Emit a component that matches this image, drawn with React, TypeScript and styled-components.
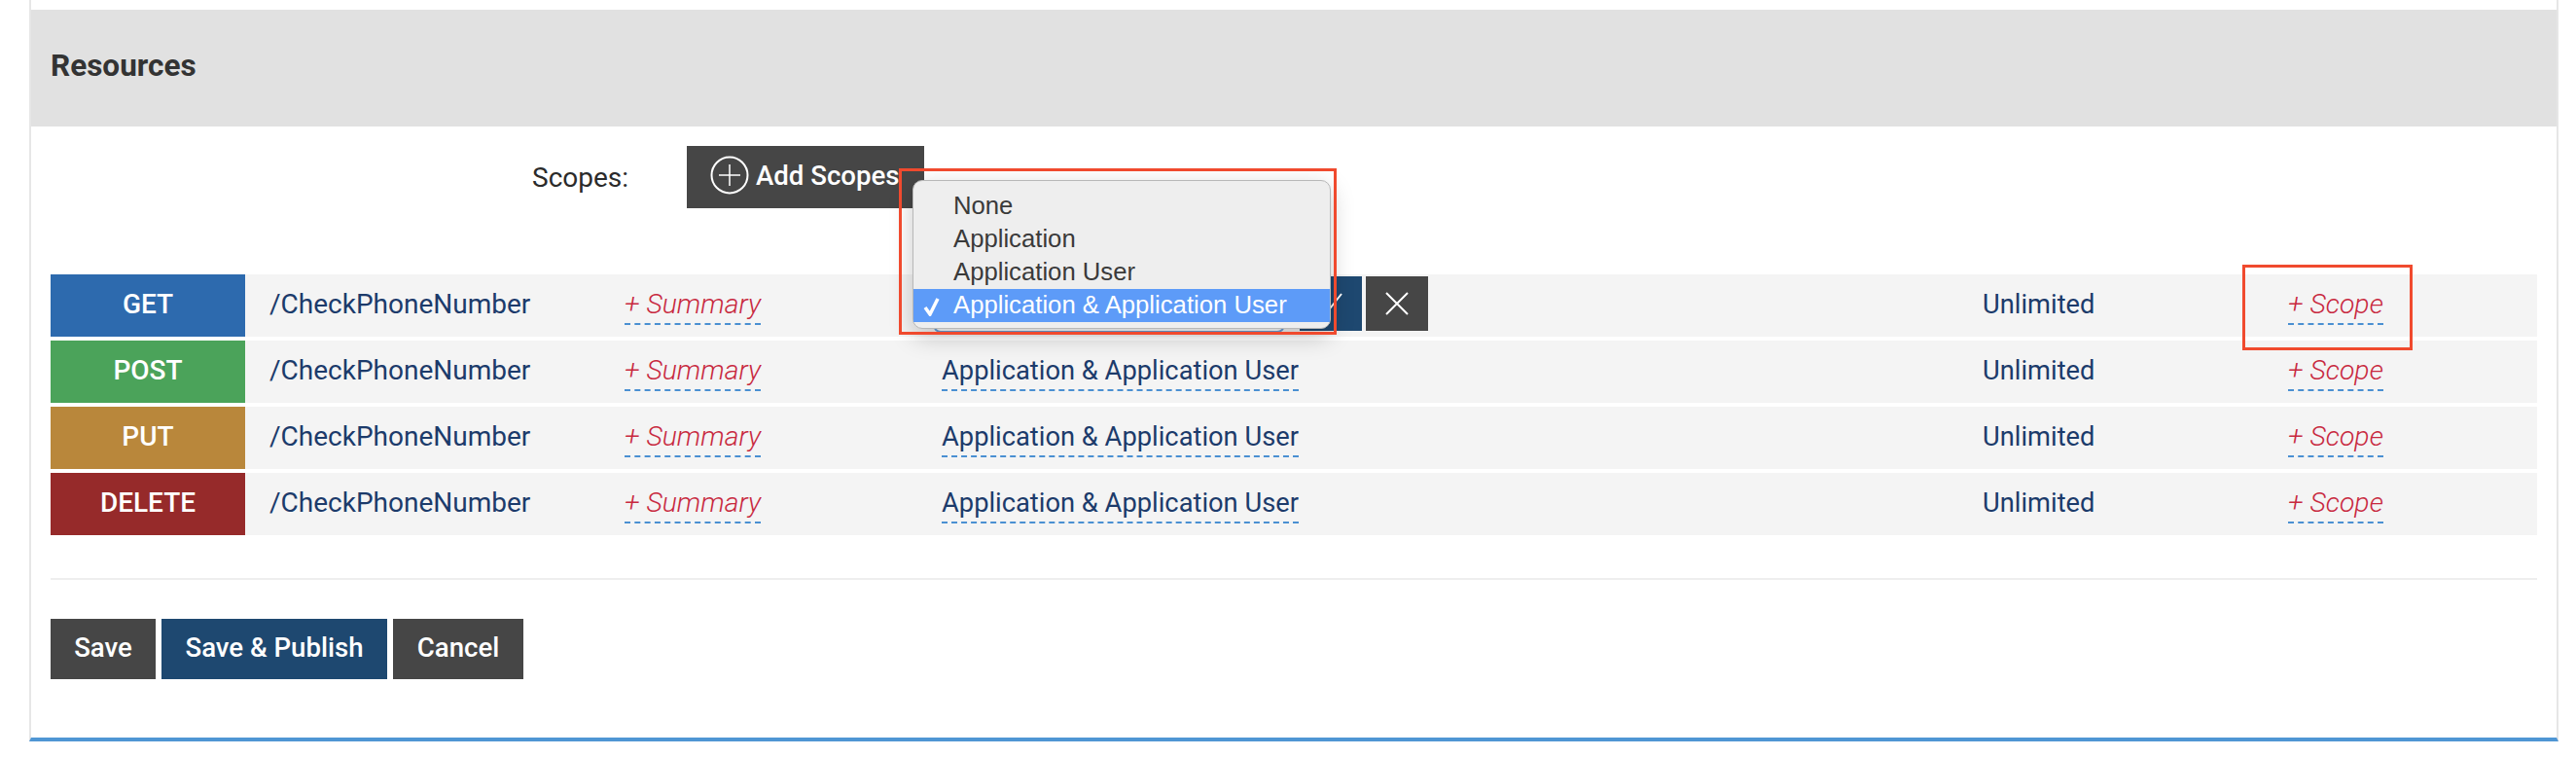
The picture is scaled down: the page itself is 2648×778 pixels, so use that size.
import React from "react";
import styled, { createGlobalStyle } from "styled-components";

const Global = createGlobalStyle`
  html, body { margin: 0; padding: 0; background: #fff; }
  body { font-family: Roboto, "Liberation Sans", sans-serif; width: 2648px; height: 778px; overflow: hidden; }
`;
const Page = styled.div`padding: 0 18px 0 30px;`;
const Card = styled.section`
  position: relative;
  box-sizing: border-box;
  width: 2600px;
  height: 762px;
  padding-top: 10px;
  border-left: 2px solid #e6e6e6;
  border-right: 2px solid #e6e6e6;
  border-bottom: 4px solid #4f96d4;
`;
const Header = styled.header`
  height: 120px;
  display: flex;
  align-items: center;
  padding-left: 20px;
  background: #e1e1e1;
`;
const Title = styled.h2`
  margin: 0 0 6px;
  font-size: 31.5px;
  font-weight: 700;
  color: #333;
`;
const Body = styled.div`padding: 20px 20px 0;`;
const ScopesBar = styled.div`
  display: flex;
  align-items: center;
  height: 64px;
  padding-left: 495px;
`;
const ScopesLabel = styled.span`
  width: 159px;
  font-size: 28px;
  color: #2b2b2b;
`;
const AddButton = styled.button`
  display: flex;
  align-items: center;
  gap: 7px;
  box-sizing: border-box;
  width: 244px;
  height: 64px;
  padding: 0 0 4px 24px;
  border: 0;
  background: #464646;
  color: #fff;
  font: 500 27.6px Roboto, sans-serif;
  white-space: nowrap;
`;
const Rows = styled.div`
  display: flex;
  flex-direction: column;
  gap: 4px;
  margin-top: 68px;
`;
const Row = styled.div`
  display: grid;
  grid-template-columns: 200px 390px 326px 1070px 314px 1fr;
  align-items: center;
  height: 64px;
  background: #f4f4f4;
  color: #1c3b6b;
  font-size: 28px;
`;
const Method = styled.div<{ $color: string }>`
  align-self: stretch;
  display: flex;
  align-items: center;
  justify-content: center;
  padding-bottom: 4px;
  background: ${(p) => p.$color};
  color: #fff;
  font-weight: 500;
  font-size: 28px;
`;
const Cell = styled.div<{ $pad?: number }>`
  padding-left: ${(p) => p.$pad ?? 0}px;
  padding-bottom: 4px;
  white-space: nowrap;
`;
const EditCell = styled.div`
  display: flex;
  padding-top: 3px;
  white-space: nowrap;
`;
const Editable = styled.span<{ $empty?: boolean }>`
  display: inline-block;
  line-height: 32px;
  padding-bottom: 3px;
  border-bottom: 2px dashed #4a90d2;
  color: ${(p) => (p.$empty ? "#c8293f" : "#1c3b6b")};
  font-style: ${(p) => (p.$empty ? "italic" : "normal")};
  font-weight: ${(p) => (p.$empty ? 300 : 400)};
  font-size: ${(p) => (p.$empty ? "28.4px" : "27.3px")};
`;
const Plain = styled(Cell)`
  font-size: 27.3px;
  padding-bottom: 3px;
`;
const EditGroup = styled.div`
  display: flex;
  align-items: flex-start;
  gap: 4px;
  align-self: start;
  margin: 2px 0 0 -9px;
  height: 56px;
`;
const SelectBox = styled.div`
  box-sizing: border-box;
  width: 362px;
  height: 58px;
  margin-right: 11px;
  border: 2px solid #6a9fd8;
  border-radius: 8px;
  background: #fff;
`;
const IconButton = styled.button<{ $color: string }>`
  display: flex;
  align-items: center;
  justify-content: center;
  width: 64px;
  height: 56px;
  padding: 0;
  border: 0;
  background: ${(p) => p.$color};
`;
const Divider = styled.hr`
  margin: 44px 0 40px;
  border: 0;
  height: 2px;
  background: #eeeeee;
`;
const Actions = styled.div`
  display: flex;
  gap: 6px;
`;
const ActionButton = styled.button<{ $color: string; $width: number }>`
  width: ${(p) => p.$width}px;
  height: 62px;
  padding: 0 0 4px;
  border: 0;
  background: ${(p) => p.$color};
  color: #fff;
  font: 500 27.6px Roboto, sans-serif;
`;
const Menu = styled.ul`
  position: absolute;
  left: 906px;
  top: 185px;
  box-sizing: border-box;
  width: 430px;
  height: 153px;
  margin: 0;
  padding: 9px 0 0;
  list-style: none;
  background: #eeeeee;
  border: 1px solid #b8b8b8;
  border-radius: 10px;
  box-shadow: 0 8px 24px rgba(0, 0, 0, 0.22);
  font-family: "Liberation Sans", Arial, sans-serif;
  font-size: 25.7px;
  color: #3a3a3a;
`;
const MenuItem = styled.li<{ $active?: boolean }>`
  position: relative;
  height: 34px;
  line-height: 33px;
  padding-left: 41px;
  white-space: nowrap;
  background: ${(p) => (p.$active ? "#5d9bf8" : "transparent")};
  color: ${(p) => (p.$active ? "#fff" : "#3a3a3a")};
`;
const Tick = styled.svg`
  position: absolute;
  left: 10px;
  top: 8px;
`;
const Highlight = styled.div<{ $l: number; $t: number; $w: number; $h: number }>`
  position: absolute;
  left: ${(p) => p.$l}px;
  top: ${(p) => p.$t}px;
  width: ${(p) => p.$w}px;
  height: ${(p) => p.$h}px;
  box-sizing: border-box;
  border: 3px solid #f04a2e;
  pointer-events: none;
`;

const methods = [
  { name: "GET", color: "#2d6aae" },
  { name: "POST", color: "#4ba35a" },
  { name: "PUT", color: "#b9873b" },
  { name: "DELETE", color: "#962a2a" },
];

export default function App() {
  return (
    <Page>
      <Global />
      <Card>
        <Header><Title>Resources</Title></Header>
        <Body>
          <ScopesBar>
            <ScopesLabel>Scopes:</ScopesLabel>
            <AddButton>
              <svg width="40" height="40" viewBox="0 0 40 40" fill="none" stroke="#fff">
                <circle cx="20" cy="20" r="18.5" strokeWidth="2" />
                <path d="M20 9v22M9 20h22" strokeWidth="1.5" />
              </svg>
              Add Scopes
            </AddButton>
          </ScopesBar>
          <Rows>
            {methods.map((m, i) => (
              <Row key={m.name}>
                <Method $color={m.color}>{m.name}</Method>
                <Cell $pad={25}>/CheckPhoneNumber</Cell>
                <EditCell><Editable $empty>+ Summary</Editable></EditCell>
                {i === 0 ? (
                  <EditGroup>
                    <SelectBox />
                    <IconButton $color="#1e4870">
                      <svg width="28" height="28" viewBox="0 0 28 28" fill="none" stroke="#fff" strokeWidth="2">
                        <path d="M3 15l7 8L25 4" />
                      </svg>
                    </IconButton>
                    <IconButton $color="#464646">
                      <svg width="26" height="26" viewBox="0 0 26 26" fill="none" stroke="#fff" strokeWidth="2">
                        <path d="M2 2l22 22M24 2L2 24" />
                      </svg>
                    </IconButton>
                  </EditGroup>
                ) : (
                  <EditCell><Editable>Application &amp; Application User</Editable></EditCell>
                )}
                <Plain>Unlimited</Plain>
                <EditCell><Editable $empty>+ Scope</Editable></EditCell>
              </Row>
            ))}
          </Rows>
          <Divider />
          <Actions>
            <ActionButton $color="#464646" $width={108}>Save</ActionButton>
            <ActionButton $color="#1e4870" $width={232}>Save &amp; Publish</ActionButton>
            <ActionButton $color="#464646" $width={134}>Cancel</ActionButton>
          </Actions>
        </Body>
        <Menu>
          <MenuItem>None</MenuItem>
          <MenuItem>Application</MenuItem>
          <MenuItem>Application User</MenuItem>
          <MenuItem $active>
            <Tick width="18" height="20" viewBox="0 0 18 20" fill="none" stroke="#fff" strokeWidth="3.5">
              <path d="M2 11l5 7L15 2" />
            </Tick>
            Application &amp; Application User
          </MenuItem>
        </Menu>
        <Highlight $l={892} $t={173} $w={450} $h={171} />
        <Highlight $l={2273} $t={272} $w={175} $h={88} />
      </Card>
    </Page>
  );
}
